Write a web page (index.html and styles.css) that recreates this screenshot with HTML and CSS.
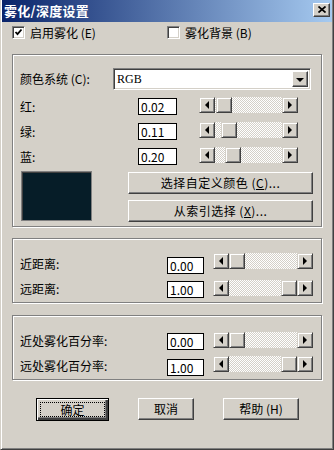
FILE: index.html
```html
<!DOCTYPE html>
<html lang="zh-CN">
<head>
  <meta charset="UTF-8">
  <title>雾化/深度设置</title>
  <link rel="stylesheet" href="styles.css">
</head>
<body>
  <div class="window">
    <div class="titlebar">
      <span class="title">雾化/深度设置</span>
      <span class="close-btn">
        <svg width="8" height="7" viewBox="0 0 8 7"><path d="M0.5 0.5l7 6M7.5 0.5l-7 6" stroke="#000" stroke-width="1.7" fill="none"/></svg>
      </span>
    </div>

    <div class="content">
      <div class="checks">
        <div class="check">
          <span class="box"><svg width="9" height="9" viewBox="0 0 9 9"><path d="M1.5 4l2 2.2 4-4.7" stroke="#000" stroke-width="1.8" fill="none"/></svg></span>
          <span>启用雾化 (E)</span>
        </div>
        <div class="check check-bg">
          <span class="box"></span>
          <span>雾化背景 (B)</span>
        </div>
      </div>

      <!-- colour group -->
      <div class="group group-color">
        <div class="combo-row">
          <span class="label combo-label">颜色系统 (C):</span>
          <div class="combo">
            <span class="combo-text">RGB</span>
            <span class="drop"><i class="tri tri-down"></i></span>
          </div>
        </div>

        <div class="row color-row">
          <span class="label color-label">红:</span>
          <span class="edit">0.02</span>
          <div class="scroll">
            <span class="arrow"><i class="tri tri-left"></i></span>
            <span class="track"><span class="thumb" style="margin-left: 1px"></span></span>
            <span class="arrow"><i class="tri tri-right"></i></span>
          </div>
        </div>
        <div class="row color-row">
          <span class="label color-label">绿:</span>
          <span class="edit">0.11</span>
          <div class="scroll">
            <span class="arrow"><i class="tri tri-left"></i></span>
            <span class="track"><span class="thumb" style="margin-left: 6px"></span></span>
            <span class="arrow"><i class="tri tri-right"></i></span>
          </div>
        </div>
        <div class="row color-row">
          <span class="label color-label">蓝:</span>
          <span class="edit">0.20</span>
          <div class="scroll">
            <span class="arrow"><i class="tri tri-left"></i></span>
            <span class="track"><span class="thumb" style="margin-left: 10px"></span></span>
            <span class="arrow"><i class="tri tri-right"></i></span>
          </div>
        </div>

        <div class="swatch-row">
          <div class="swatch"></div>
          <div class="swatch-btns">
            <button class="btn wide">选择自定义颜色 (<u>C</u>)...</button>
            <button class="btn wide">从索引选择 (<u>X</u>)...</button>
          </div>
        </div>
      </div>

      <!-- distance group -->
      <div class="group group-dist">
        <div class="row dist-row first">
          <span class="label dist-label">近距离:</span>
          <span class="edit short">0.00</span>
          <div class="scroll long">
            <span class="arrow"><i class="tri tri-left"></i></span>
            <span class="track"><span class="thumb" style="margin-left: 0px"></span></span>
            <span class="arrow"><i class="tri tri-right"></i></span>
          </div>
        </div>
        <div class="row dist-row second">
          <span class="label dist-label">远距离:</span>
          <span class="edit short">1.00</span>
          <div class="scroll long">
            <span class="arrow"><i class="tri tri-left"></i></span>
            <span class="track"><span class="thumb" style="margin-left: 52px"></span></span>
            <span class="arrow"><i class="tri tri-right"></i></span>
          </div>
        </div>
      </div>

      <!-- percentage group -->
      <div class="group group-pct">
        <div class="row dist-row pct-first">
          <span class="label dist-label">近处雾化百分率:</span>
          <span class="edit short">0.00</span>
          <div class="scroll long">
            <span class="arrow"><i class="tri tri-left"></i></span>
            <span class="track"><span class="thumb" style="margin-left: 0px"></span></span>
            <span class="arrow"><i class="tri tri-right"></i></span>
          </div>
        </div>
        <div class="row dist-row pct-second">
          <span class="label dist-label">远处雾化百分率:</span>
          <span class="edit short">1.00</span>
          <div class="scroll long">
            <span class="arrow"><i class="tri tri-left"></i></span>
            <span class="track"><span class="thumb" style="margin-left: 52px"></span></span>
            <span class="arrow"><i class="tri tri-right"></i></span>
          </div>
        </div>
      </div>

      <div class="actions">
        <button class="btn default"><span class="focus">确定</span></button>
        <button class="btn cancel">取消</button>
        <button class="btn help">帮助 (H)</button>
      </div>
    </div>
  </div>
</body>
</html>
```

FILE: styles.css
```css
/* classic windows dialog */
body {
  margin: 0;
  padding: 0;
  background-color: #d4d0c8;
  font-family: "Noto Sans CJK SC", "Noto Sans", sans-serif;
  font-size: 12px;
  line-height: 14px;
  color: #000;
}

.window {
  width: 334px;
  height: 450px;
  box-sizing: border-box;
  padding: 0 1px 1px 1px;
  border-style: solid;
  border-width: 0 1px 1px 1px;
  border-color: #d4d0c8 #404040 #404040 #d4d0c8;
  box-shadow: inset 1px 0 #fff, inset -1px -1px #808080;
  background-color: #d4d0c8;
  display: flex;
  flex-direction: column;
}

.titlebar {
  height: 22px;
  display: flex;
  align-items: center;
  justify-content: space-between;
  padding: 0 2px 0 2px;
  background: linear-gradient(to right, #0a246a, #a6caf0);
}

.title {
  color: #fff;
  font-weight: bold;
  font-size: 13px;
  letter-spacing: 0.3px;
}

.close-btn {
  width: 17px;
  height: 14px;
  box-sizing: border-box;
  display: flex;
  align-items: center;
  justify-content: center;
  background-color: #d4d0c8;
  border: 1px solid;
  border-color: #fff #404040 #404040 #fff;
  box-shadow: inset -1px -1px #808080;
  margin-top: -3px;
}

.content {
  padding: 4px 10px 0 10px;
}

/* checkboxes */
.checks {
  display: flex;
  height: 13px;
}

.check {
  display: flex;
  align-items: center;
  gap: 5px;
  width: 159px;
}

.box {
  width: 13px;
  height: 13px;
  box-sizing: border-box;
  background-color: #fff;
  border: 1px solid;
  border-color: #808080 #fff #fff #808080;
  box-shadow: inset 1px 1px #404040, inset -1px -1px #d4d0c8;
  display: flex;
  align-items: center;
  justify-content: center;
  flex-shrink: 0;
}

/* group boxes */
.group {
  width: 310px;
  box-sizing: border-box;
  border: 1px solid #808080;
  box-shadow: inset 1px 1px #fff, 1px 1px #fff;
  padding-left: 7px;
}

.group-color {
  margin-top: 15px;
  padding-top: 13px;
  padding-bottom: 4px;
}

.group-dist {
  margin-top: 11px;
  padding-top: 14px;
  padding-bottom: 4px;
}

.group-pct {
  margin-top: 12px;
  padding-top: 16px;
  padding-bottom: 3px;
}

.row {
  display: flex;
  align-items: flex-start;
}

.label {
  flex-shrink: 0;
  align-self: center;
}

/* combo */
.combo-row {
  display: flex;
  align-items: center;
  height: 22px;
}

.combo-label {
  width: 93px;
}

.combo {
  width: 198px;
  height: 22px;
  box-sizing: border-box;
  background-color: #fff;
  border: 1px solid;
  border-color: #808080 #fff #fff #808080;
  box-shadow: inset 1px 1px #404040, inset -1px -1px #d4d0c8;
  display: flex;
  align-items: center;
  justify-content: space-between;
  padding: 2px 2px 2px 3px;
}

.combo-text {
  font-family: "Liberation Serif", serif;
  font-size: 12px;
}

.drop {
  width: 16px;
  height: 16px;
  box-sizing: border-box;
  background-color: #d4d0c8;
  border: 1px solid;
  border-color: #fff #404040 #404040 #fff;
  box-shadow: inset -1px -1px #808080;
  display: flex;
  align-items: center;
  justify-content: center;
}

/* triangles */
.tri {
  width: 0;
  height: 0;
  display: block;
}

.tri-down {
  border-left: 4px solid transparent;
  border-right: 4px solid transparent;
  border-top: 4px solid #000;
  margin-top: 1px;
}

.tri-left {
  border-top: 4px solid transparent;
  border-bottom: 4px solid transparent;
  border-right: 4px solid #000;
}

.tri-right {
  border-top: 4px solid transparent;
  border-bottom: 4px solid transparent;
  border-left: 4px solid #000;
}

/* edit fields */
.edit {
  width: 39px;
  height: 17px;
  box-sizing: border-box;
  border: 1px solid #000;
  background-color: #fff;
  padding-left: 2px;
  line-height: 15px;
  flex-shrink: 0;
}

.edit.short {
  width: 37px;
}

/* scrollbars */
.scroll {
  display: flex;
  width: 99px;
  height: 16px;
  flex-shrink: 0;
}

.scroll.long {
  width: 100px;
}

.arrow,
.thumb {
  width: 16px;
  height: 16px;
  box-sizing: border-box;
  background-color: #d4d0c8;
  border: 1px solid;
  border-color: #d4d0c8 #404040 #404040 #d4d0c8;
  box-shadow: inset 1px 1px #fff, inset -1px -1px #808080;
  flex-shrink: 0;
}

.arrow {
  display: flex;
  align-items: center;
  justify-content: center;
}

.track {
  flex: 1;
  display: flex;
  background: repeating-conic-gradient(#fff 0 25%, #d4d0c8 0 50%) 0 0 / 2px 2px;
}

/* colour rows */
.color-row {
  margin-top: 7px;
  height: 18px;
}

.color-label {
  width: 118px;
  margin-top: 1px;
}

.color-row .edit {
  margin-top: 1px;
  margin-right: 22px;
}

.swatch-row {
  display: flex;
  margin-top: 6px;
}

.swatch {
  width: 71px;
  height: 50px;
  box-sizing: border-box;
  margin-left: 1px;
  background-color: #061d28;
  border: 1px solid #808080;
  box-shadow: inset 1px 1px #404040;
}

.swatch-btns {
  display: flex;
  flex-direction: column;
  gap: 6px;
  margin-left: 36px;
  margin-top: 1px;
}

/* buttons */
.btn {
  font-family: inherit;
  font-size: 12px;
  line-height: 14px;
  color: #000;
  background-color: #d4d0c8;
  border: 1px solid;
  border-color: #fff #404040 #404040 #fff;
  box-shadow: inset -1px -1px #808080;
  padding: 0;
  margin: 0;
  height: 22px;
  box-sizing: border-box;
  display: flex;
  align-items: center;
  justify-content: center;
}

.btn.wide {
  width: 185px;
  letter-spacing: 0.5px;
}

/* distance rows */
.dist-row .edit {
  margin-right: 9px;
}

.dist-label {
  width: 147px;
}

.dist-row.first {
  height: 21px;
}

.dist-row.first .edit {
  margin-top: 4px;
}

.dist-row.second {
  margin-top: 6px;
  height: 18px;
}

.dist-row.second .edit {
  margin-top: 1px;
}

.dist-row.pct-first {
  height: 18px;
}

.dist-row.pct-first .edit {
  margin-top: 1px;
}

.dist-row.pct-second {
  margin-top: 6px;
  height: 20px;
}

.dist-row.pct-second .edit {
  margin-top: 3px;
}

/* bottom buttons */
.actions {
  display: flex;
  margin-top: 18px;
  padding-left: 24px;
  gap: 29px;
}

.btn.default {
  width: 73px;
  height: 23px;
  border: 1px solid #000;
  box-shadow: inset 1px 1px #fff, inset -2px -2px #404040, inset -3px -3px #808080;
  padding: 3px;
}

.focus {
  flex: 1;
  align-self: stretch;
  display: flex;
  align-items: center;
  justify-content: center;
  border: 1px dotted #000;
}

.btn.cancel {
  width: 56px;
}

.btn.help {
  width: 76px;
}
```
